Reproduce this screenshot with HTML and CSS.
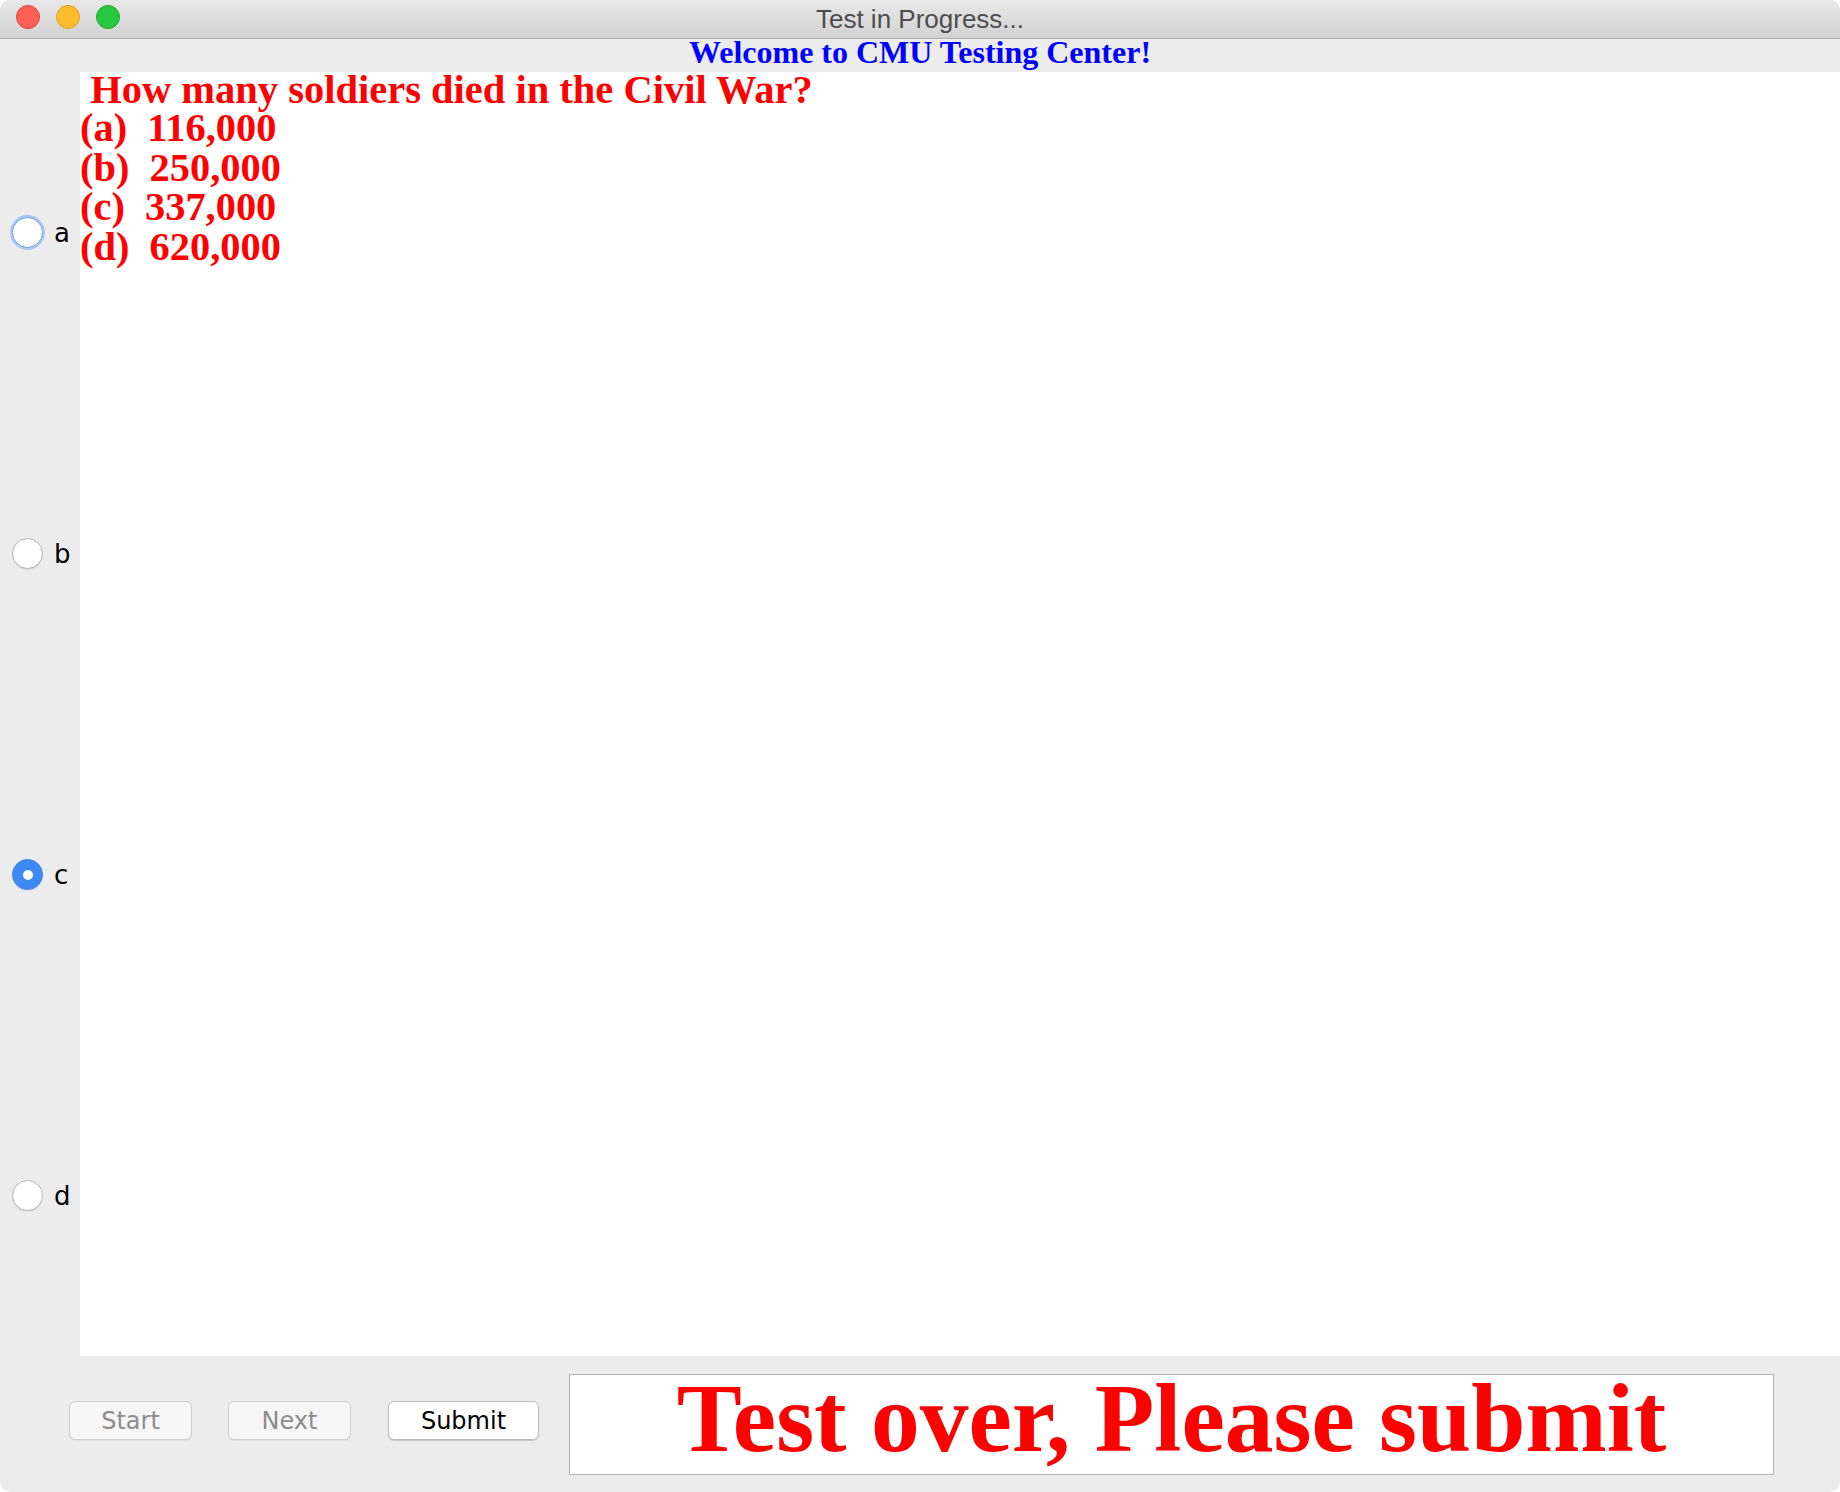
FILE: index.html
```html
<!DOCTYPE html>
<html>
<head>
<meta charset="utf-8">
<title>Test in Progress...</title>
<link rel="stylesheet" href="styles.css">
</head>
<body>
<div class="window">
  <div class="titlebar">
    <div class="lights">
      <span class="light red"></span>
      <span class="light yellow"></span>
      <span class="light green"></span>
    </div>
    <div class="title">Test in Progress...</div>
    <div></div>
  </div>
  <div class="welcome">Welcome to CMU Testing Center!</div>
  <div class="main">
    <div class="choices">
      <label class="choice"><span class="radio focus"></span><span class="clabel">a</span></label>
      <label class="choice"><span class="radio"></span><span class="clabel">b</span></label>
      <label class="choice"><span class="radio checked"></span><span class="clabel">c</span></label>
      <label class="choice"><span class="radio"></span><span class="clabel">d</span></label>
    </div>
    <div class="panel">
      <div class="question">&nbsp;How many soldiers died in the Civil War?</div>
      <div class="options">
        <div>(a)&nbsp; 116,000</div>
        <div>(b)&nbsp; 250,000</div>
        <div>(c)&nbsp; 337,000</div>
        <div>(d)&nbsp; 620,000</div>
      </div>
    </div>
  </div>
  <div class="bottom">
    <div class="buttons">
      <button class="btn disabled">Start</button>
      <button class="btn disabled">Next</button>
      <button class="btn submit">Submit</button>
    </div>
    <div class="message">Test over, Please submit</div>
  </div>
</div>
</body>
</html>
```
FILE: styles.css
```css
html, body {
  margin: 0;
  padding: 0;
  background: #ffffff;
}
.window {
  width: 1840px;
  height: 1492px;
  display: flex;
  flex-direction: column;
  background: #ececec;
  border-radius: 10px;
  overflow: hidden;
}
.titlebar {
  height: 38px;
  border-bottom: 1px solid #b0b0b0;
  background: linear-gradient(#e9e8e9, #d3d2d3);
  display: grid;
  grid-template-columns: 1fr auto 1fr;
  align-items: center;
}
.lights {
  display: flex;
  gap: 16px;
  padding-left: 16px;
  align-self: start;
  margin-top: 5px;
}
.light {
  width: 22px;
  height: 22px;
  border-radius: 50%;
  border: 1px solid;
}
.red { background: #ff5f57; border-color: #e0443e; }
.yellow { background: #febc2e; border-color: #dea123; }
.green { background: #28c840; border-color: #1aab29; }
.title {
  font-family: "Liberation Sans", Arial, sans-serif;
  font-size: 26px;
  line-height: 38px;
  color: #4d4d4d;
}
.welcome {
  height: 33px;
  line-height: 27px;
  text-align: center;
  font-family: "Liberation Serif", "Times New Roman", serif;
  font-weight: bold;
  font-size: 32px;
  color: #0000ff;
  white-space: nowrap;
}
.main {
  flex: 1;
  display: flex;
  min-height: 0;
}
.choices {
  width: 80px;
  display: flex;
  flex-direction: column;
}
.choice {
  flex: 1;
  display: flex;
  align-items: center;
  padding-left: 12px;
  gap: 11px;
}
.radio {
  box-sizing: border-box;
  width: 31px;
  height: 31px;
  border-radius: 50%;
  background: #ffffff;
  border: 1px solid #b5b5b5;
  box-shadow: 0 1px 1px rgba(0,0,0,0.08);
  display: flex;
  align-items: center;
  justify-content: center;
}
.radio.focus {
  border: 1px solid #6fa3e8;
  box-shadow: 0 0 0 2px #a9c9f2;
}
.radio.checked {
  background: #3d8af7;
  border-color: #3a84ee;
}
.radio.checked::after {
  content: "";
  width: 10px;
  height: 10px;
  border-radius: 50%;
  background: #ffffff;
}
.clabel {
  font-family: "DejaVu Sans", sans-serif;
  font-size: 26px;
  color: #000000;
}
.panel {
  flex: 1;
  background: #ffffff;
  font-family: "Liberation Serif", "Times New Roman", serif;
  font-weight: bold;
  font-size: 40px;
  color: #ff0000;
  white-space: nowrap;
}
.question {
  font-size: 40.5px;
  line-height: 36px;
}
.options {
  font-size: 40.4px;
  line-height: 39.5px;
}
.bottom {
  height: 136px;
  display: flex;
  align-items: center;
}
.buttons {
  display: flex;
  gap: 36px;
  padding-left: 69px;
  margin-bottom: 7px;
}
.btn {
  box-sizing: border-box;
  width: 123px;
  height: 39px;
  border-radius: 6px;
  border: 1px solid #cdcdcd;
  background: #f6f6f6;
  font-family: "DejaVu Sans", sans-serif;
  font-size: 24px;
  color: #8c8c8c;
  padding: 0;
  box-shadow: 0 1px 1px rgba(0,0,0,0.06);
}
.btn.submit {
  width: 151px;
  margin-left: 1px;
  background: #ffffff;
  color: #000000;
  border-color: #bcbcbc;
  box-shadow: 0 1px 1px rgba(0,0,0,0.15);
}
.message {
  box-sizing: border-box;
  margin-left: 30px;
  width: 1205px;
  height: 101px;
  border: 1px solid #b4b4b4;
  background: #ffffff;
  display: flex;
  align-items: center;
  justify-content: center;
  padding-bottom: 12px;
  font-family: "Liberation Serif", "Times New Roman", serif;
  font-weight: bold;
  font-size: 97.5px;
  line-height: 99px;
  color: #ff0000;
  white-space: nowrap;
}
```
